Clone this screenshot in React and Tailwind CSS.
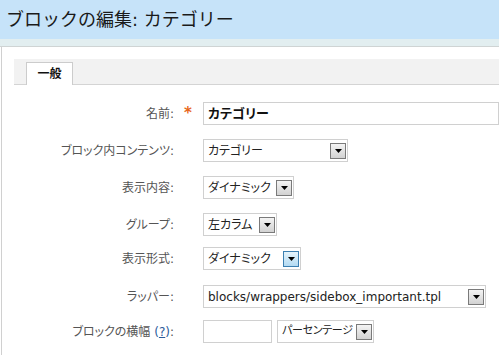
import React from 'react';

const font = "font-['DejaVu_Sans','Noto_Sans_CJK_JP',sans-serif]";

const Arrow = ({ hover }) => (
  <span
    className={`flex h-[16px] w-[16px] shrink-0 items-center justify-center border ${
      hover
        ? 'border-[#3c7fb1] bg-gradient-to-b from-[#e5f4fc] to-[#b3daf2]'
        : 'border-[#7a7a7a] bg-gradient-to-b from-[#f4f4f4] to-[#d2d2d2]'
    }`}
  >
    <svg width="7" height="4" viewBox="0 0 7 4">
      <path d="M0 0h7L3.5 4z" fill="#000" />
    </svg>
  </span>
);

const Select = ({ width, children, hover, tight }) => (
  <div
    className={`flex h-[23px] items-center justify-between border border-[#d0d0d0] bg-white pl-[4px] pr-[1px] ${width}`}
  >
    <span
      className={`whitespace-nowrap text-[#222] [font-feature-settings:'palt'] ${
        tight ? 'text-[11px] tracking-[-0.3px]' : 'text-[12px]'
      }`}
    >
      {children}
    </span>
    <Arrow hover={hover} />
  </div>
);

const Row = ({ label, req, mt, children }) => (
  <div className={`flex h-[23px] items-center ${mt}`}>
    <div className="w-[162px] whitespace-nowrap pr-[2px] text-right text-[12px] text-[#555] [font-feature-settings:'palt']">
      {label}
    </div>
    <div className="flex w-[27px] justify-center pr-[3px] text-[15px] font-bold text-[#e8661c]">
      {req ? '*' : ''}
    </div>
    {children}
  </div>
);

export default function App() {
  return (
    <div className={`h-[355px] w-[499px] overflow-hidden bg-white ${font}`}>
      <div className="flex h-[39px] items-center bg-[#c6e3f9] pl-[6px]">
        <h1 className="text-[18px] font-normal text-[#1a1a1a]">
          ブロックの編集: カテゴリー
        </h1>
      </div>
      <div className="h-[8px] border-b border-[#cfd4d4] bg-[#e2eef0]" />
      <div className="ml-[1px] h-full border-l border-[#d0d0d0] pl-[12px] pt-[12px]">
        <div className="flex h-[26px] items-end border-b border-[#d4d4d4] bg-[#f2f2f2] pl-[12px]">
          <div className="-mb-px flex h-[23px] w-[47px] items-center justify-center border border-b-0 border-[#cccccc] bg-white text-[12px] font-bold text-[#111]">
            一般
          </div>
        </div>

        <Row label="名前:" req mt="mt-[17px]">
          <div className="flex h-[23px] flex-1 items-center border border-[#d0d0d0] bg-white pl-[4px] text-[13px] font-bold text-[#111] [font-feature-settings:'palt']">
            カテゴリー
          </div>
        </Row>
        <Row label="ブロック内コンテンツ:" mt="mt-[14px]">
          <Select width="w-[145px]">カテゴリー</Select>
        </Row>
        <Row label="表示内容:" mt="mt-[14px]">
          <Select width="w-[91px]">ダイナミック</Select>
        </Row>
        <Row label="グループ:" mt="mt-[14px]">
          <Select width="w-[74px]">左カラム</Select>
        </Row>
        <Row label="表示形式:" mt="mt-[11px]">
          <Select width="w-[98px]" hover>
            ダイナミック
          </Select>
        </Row>
        <Row label="ラッパー:" mt="mt-[15px]">
          <Select width="w-[283px]">blocks/wrappers/sidebox_important.tpl</Select>
        </Row>
        <Row
          label={
            <>
              ブロックの横幅{' '}
              <span className="text-[#2a5a9a]">
                (<span className="underline">?</span>)
              </span>
              :
            </>
          }
          mt="mt-[12px]"
        >
          <div className="h-[23px] w-[69px] border border-[#d0d0d0] bg-white" />
          <div className="ml-[5px]">
            <Select width="w-[97px]" tight>
              パーセンテージ
            </Select>
          </div>
        </Row>
      </div>
    </div>
  );
}
